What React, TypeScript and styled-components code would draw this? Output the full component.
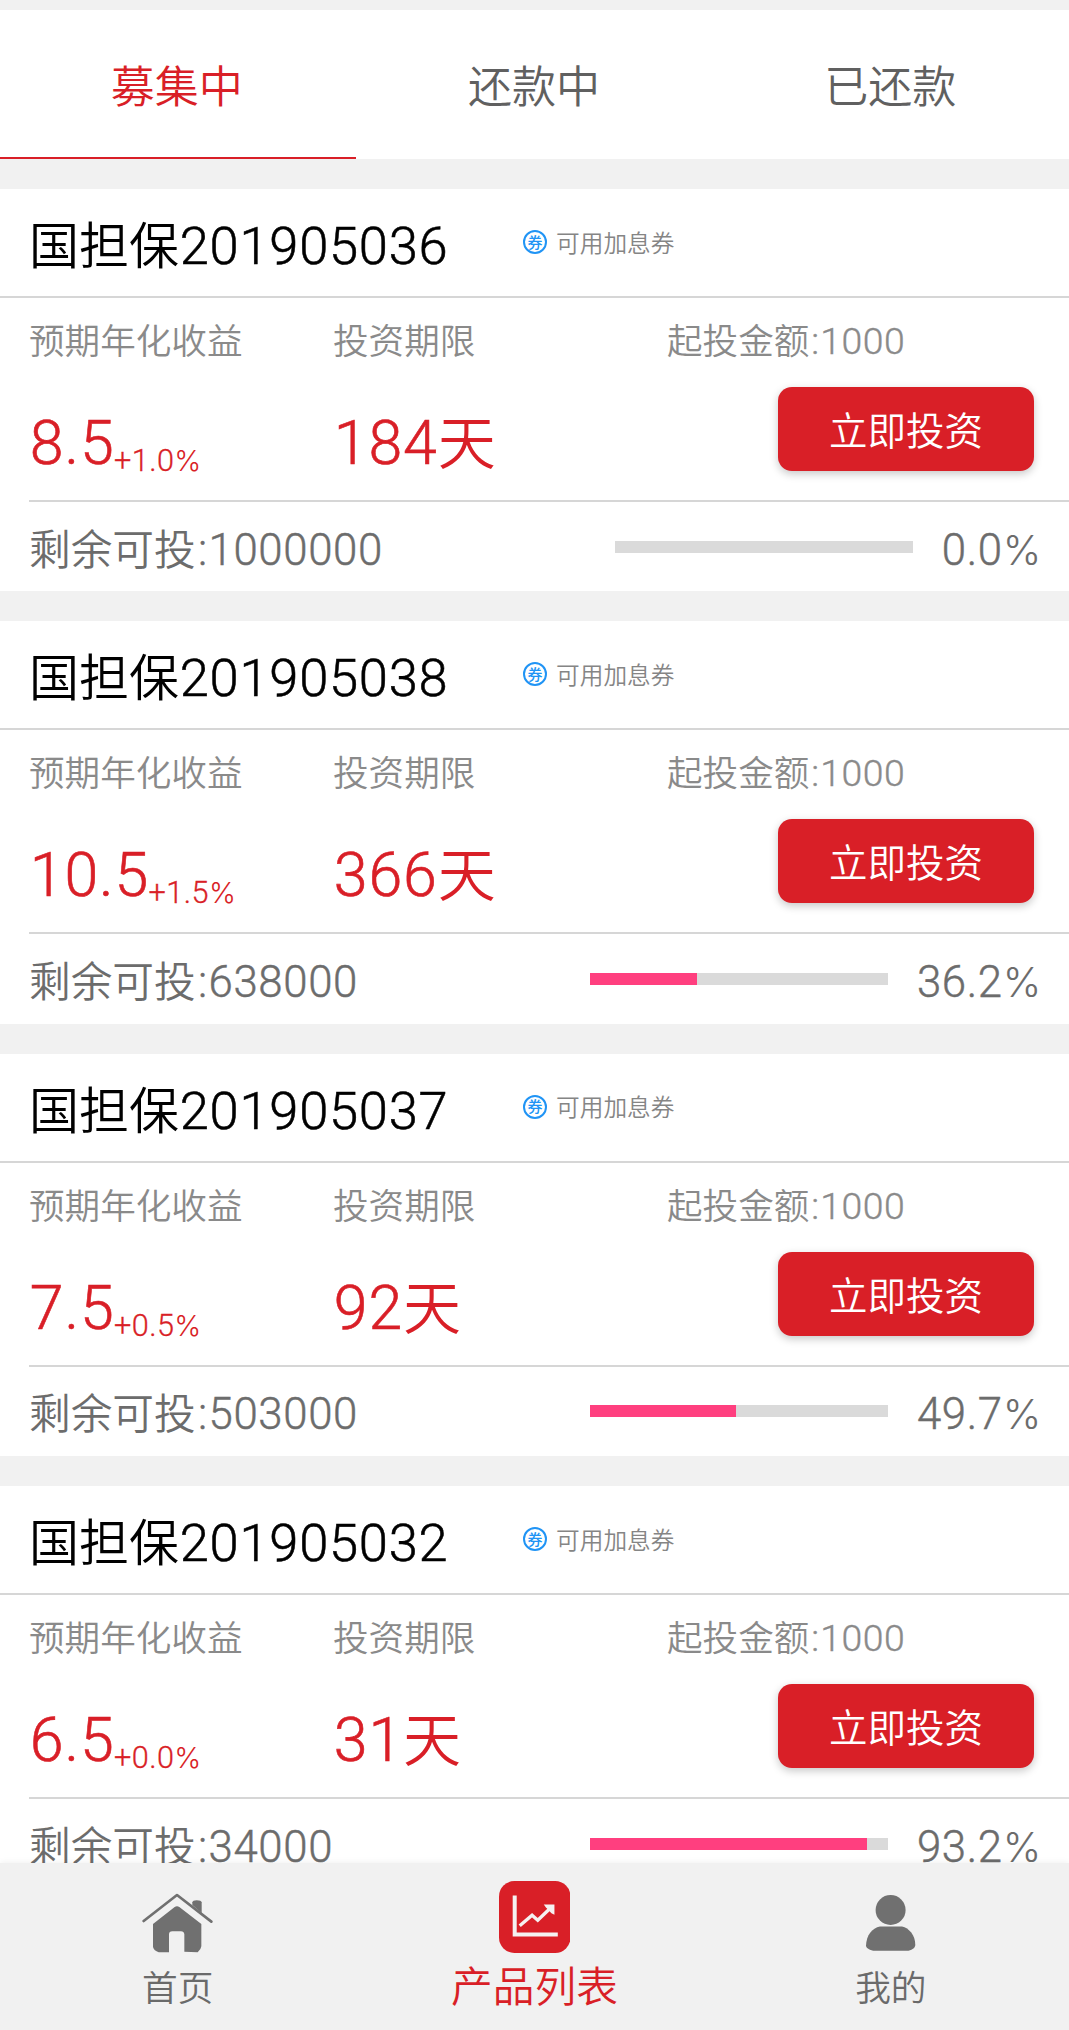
import React from "react";
import styled, { createGlobalStyle } from "styled-components";

const RED = "#d91f27";
const CJK = '"Noto Sans CJK SC DemiLight", "Noto Sans CJK SC", sans-serif';

const GlobalStyle = createGlobalStyle`
  * { box-sizing: border-box; }
  body {
    margin: 0;
    background: #f1f1f1;
    font-family: ${CJK};
    font-weight: 350;
  }
`;

const Screen = styled.div`
  width: 1069px;
  height: 2030px;
  padding-top: 10px;
  display: flex;
  flex-direction: column;
  overflow: hidden;
  background: #f1f1f1;
`;

const Tabs = styled.div`
  display: grid;
  grid-template-columns: repeat(3, 1fr);
  flex: none;
  height: 149px;
  background: #fff;
`;

const Tab = styled.div<{ $active?: boolean }>`
  text-align: center;
  font-size: 44px;
  line-height: 149px;
  height: 149px;
  padding-right: ${(p) => (p.$active ? 3 : 1)}px;
  color: ${(p) => (p.$active ? RED : "#606060")};
  border-bottom: 2px solid ${(p) => (p.$active ? RED : "transparent")};
`;

const List = styled.div`
  flex: 1;
  min-height: 0;
  overflow: hidden;
  padding-top: 30px;
  display: flex;
  flex-direction: column;
  gap: 30px;
`;

const Card = styled.section`
  flex: none;
  height: 402.45px;
  display: flex;
  flex-direction: column;
  background: #fff;
`;

const Header = styled.div`
  display: flex;
  align-items: center;
  height: 109px;
  padding-left: 29px;
  border-bottom: 2px solid #d6d6d6;
`;

const Title = styled.div`
  width: 494px;
  font-size: 50px;
  line-height: 107px;
  color: #000;
`;

const Num = styled.span`
  font-family: Roboto, "Noto Sans CJK SC", sans-serif;
  font-size: 1.05em;
  font-weight: 300;
  line-height: 0;
  letter-spacing: 0.014em;
  margin-left: 0.014em;
  -webkit-text-stroke: 0.01em currentColor;
`;

const Colon = styled.span`
  padding: 0 0.02em 0 0.035em;
`;

const PercentSign = styled.span`
  font-family: Inter, sans-serif;
  font-size: 0.94em;
  letter-spacing: -0.03em;
  -webkit-text-stroke: 0;
`;

const Coupon = styled.div`
  display: flex;
  align-items: center;
  gap: 9px;
  height: 32px;
  font-size: 23.7px;
  line-height: 28px;
  color: #858585;
`;

const CouponText = styled.span`
  padding-bottom: 2px;
`;

const CouponMark = styled.span`
  width: 24px;
  height: 24px;
  margin-bottom: 1px;
  border: 2px solid #2094f5;
  border-radius: 50%;
  display: flex;
  align-items: center;
  justify-content: center;
  font-size: 15px;
  line-height: 20px;
  padding-bottom: 1px;
  font-family: "Noto Sans CJK SC", sans-serif;
  font-weight: 500;
  color: #2094f5;
`;

const Body = styled.div`
  display: grid;
  grid-template-columns: 304px 334px 1fr;
  height: 204px;
  margin-left: 29px;
  padding-top: 16px;
  border-bottom: 2px solid #d6d6d6;
`;

const Column = styled.div`
  display: flex;
  flex-direction: column;
  align-items: flex-start;
`;

const Label = styled.div`
  font-size: 35.6px;
  line-height: 50px;
  white-space: nowrap;
  color: #8a8a8a;
`;

const Value = styled.div`
  margin-top: 41px;
  font-size: 58px;
  line-height: 68px;
  white-space: nowrap;
  color: ${RED};
`;

const Extra = styled.span`
  position: relative;
  top: 7px;
  margin-left: -1px;
  font-size: 29.2px;
`;

const InvestButton = styled.button`
  width: 256px;
  height: 84px;
  margin: 23px 35px 0 0;
  padding: 0 0 2px;
  align-self: flex-end;
  border: 0;
  border-radius: 14px;
  background: ${RED};
  box-shadow: 0 3px 8px rgba(0, 0, 0, 0.22);
  color: #fff;
  font: 350 38.5px/82px ${CJK};
`;

const Footer = styled.div`
  display: flex;
  align-items: center;
  justify-content: space-between;
  height: 89px;
  padding: 0 29px;
  font-size: 41.7px;
  line-height: 86px;
  color: #6c6c6c;
`;

const Progress = styled.div`
  display: flex;
  align-items: center;
`;

const Track = styled.div`
  width: 298px;
  height: 12px;
  background: #dadada;
`;

const Fill = styled.div`
  height: 100%;
  background: #ff3f7f;
`;

const Percent = styled.div<{ $wide: boolean }>`
  width: ${(p) => (p.$wide ? 152 : 127.5)}px;
  text-align: right;
`;

const Nav = styled.nav`
  position: relative;
  flex: none;
  display: grid;
  grid-template-columns: repeat(3, 1fr);
  height: 167px;
  background: #f1f1f1;
  box-shadow: 0 -1px 6px rgba(0, 0, 0, 0.06);
`;

const NavItem = styled.div<{ $active?: boolean }>`
  display: flex;
  flex-direction: column;
  align-items: center;
  padding-top: 18px;
  font-size: ${(p) => (p.$active ? 41.7 : 35.7)}px;
  line-height: ${(p) => (p.$active ? 61 : 64)}px;
  color: ${(p) => (p.$active ? RED : "#6a6a6a")};

  &:first-child { padding-right: 1px; }
`;

const IconBox = styled.div`
  display: flex;
  align-items: flex-end;
  justify-content: center;
  height: 72px;
  margin-bottom: 1px;
  svg { display: block; }
`;

const HomeIcon = () => (
  <svg width="71" height="60" viewBox="36 38 213 180">
    <path d="M41 122 L141 44 L244 124" fill="none" stroke="#707070" strokeWidth="8" strokeLinecap="round" strokeLinejoin="round" />
    <path d="M187 74 V66 Q188 60 200 60 Q214 60 215 66 V98 Z" fill="#707070" />
    <path d="M69 131 L134 80 Q141 75 148 80 L214 131 V198 Q213 208 203 216 L163 214 V162 Q162 153 153 153 H127 Q117 153 117 162 V216 H86 Q72 211 69 200 Z" fill="#707070" />
  </svg>
);

const ChartIcon = () => (
  <svg width="71.5" height="72" viewBox="57 47 214 215">
    <rect x="57" y="47" width="214" height="215" rx="46" fill={RED} />
    <path d="M104 90 V207 H233" fill="none" stroke="#f5f1f1" strokeWidth="12" />
    <path d="M119 181 L156 149 L173 164 L212 127" fill="none" stroke="#f5f1f1" strokeWidth="10" />
    <path d="M191 117 H223 V148 L214 143 L197 125 Z" fill="#f5f1f1" />
  </svg>
);

const PersonIcon = () => (
  <svg width="50" height="58" viewBox="0 0 50 58">
    <circle cx="24.6" cy="15" r="15" fill="#707070" />
    <path d="M14 31.5 H36 C43 33 49.3 40 49.3 50 C49.3 53 45 55.8 41 55.8 H9 C4 55.8 0 53 0 50.5 C0.5 40 6 33 14 31.5 Z" fill="#707070" />
  </svg>
);

const products = [
  { id: "201905036", rate: "8.5", extra: "+1.0", days: "184", left: "1000000", percent: 0 },
  { id: "201905038", rate: "10.5", extra: "+1.5", days: "366", left: "638000", percent: 36.2 },
  { id: "201905037", rate: "7.5", extra: "+0.5", days: "92", left: "503000", percent: 49.7 },
  { id: "201905032", rate: "6.5", extra: "+0.0", days: "31", left: "34000", percent: 93.2 },
];

export default function App() {
  return (
    <>
      <GlobalStyle />
      <Screen>
        <Tabs>
          <Tab $active>募集中</Tab>
          <Tab>还款中</Tab>
          <Tab>已还款</Tab>
        </Tabs>
        <List>
          {products.map((p) => (
            <Card key={p.id}>
              <Header>
                <Title>国担保<Num>{p.id}</Num></Title>
                <Coupon><CouponMark>券</CouponMark><CouponText>可用加息券</CouponText></Coupon>
              </Header>
              <Body>
                <Column>
                  <Label>预期年化收益</Label>
                  <Value><Num>{p.rate}</Num><Extra><Num>{p.extra}<PercentSign>%</PercentSign></Num></Extra></Value>
                </Column>
                <Column>
                  <Label>投资期限</Label>
                  <Value><Num>{p.days}</Num>天</Value>
                </Column>
                <Column>
                  <Label>起投金额<Num><Colon>:</Colon>1000</Num></Label>
                  <InvestButton>立即投资</InvestButton>
                </Column>
              </Body>
              <Footer>
                <div>剩余可投<Num><Colon>:</Colon>{p.left}</Num></div>
                <Progress>
                  <Track><Fill style={{ width: `${Math.floor(p.percent)}%` }} /></Track>
                  <Percent $wide={p.percent >= 10}><Num>{p.percent.toFixed(1)}<PercentSign>%</PercentSign></Num></Percent>
                </Progress>
              </Footer>
            </Card>
          ))}
        </List>
        <Nav>
          <NavItem><IconBox><HomeIcon /></IconBox>首页</NavItem>
          <NavItem $active><IconBox><ChartIcon /></IconBox>产品列表</NavItem>
          <NavItem><IconBox><PersonIcon /></IconBox>我的</NavItem>
        </Nav>
      </Screen>
    </>
  );
}
